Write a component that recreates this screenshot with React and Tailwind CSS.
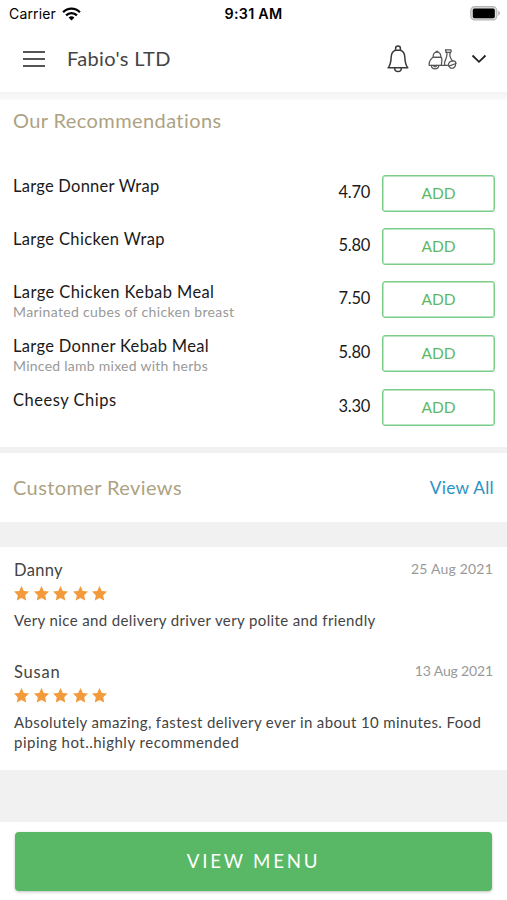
import React from "react";

const items = [
  { name: "Large Donner Wrap", price: "4.70", row: "h-[53px]", track: "tracking-[0.25px]" },
  { name: "Large Chicken Wrap", price: "5.80", row: "h-[53px]", track: "tracking-[0.35px]" },
  { name: "Large Chicken Kebab Meal", note: "Marinated cubes of chicken breast", noteTrack: "tracking-[0.34px]", price: "7.50", row: "h-[54px]", track: "tracking-[0.4px]" },
  { name: "Large Donner Kebab Meal", note: "Minced lamb mixed with herbs", noteTrack: "tracking-[0.26px]", price: "5.80", row: "h-[54px]", track: "tracking-[0.33px]" },
  { name: "Cheesy Chips", price: "3.30", row: "h-[58px]", track: "tracking-[0.5px]" },
];

const reviews = [
  {
    name: "Danny",
    nameTrack: "tracking-[0.3px]",
    date: "25 Aug 2021",
    dateTrack: "tracking-[0.2px]",
    lines: [{ text: "Very nice and delivery driver very polite and friendly", track: "tracking-[0.38px]" }],
  },
  {
    name: "Susan",
    nameTrack: "tracking-[0.8px]",
    date: "13 Aug 2021",
    dateTrack: "tracking-[-0.15px]",
    lines: [
      { text: "Absolutely amazing, fastest delivery ever in about 10 minutes. Food", track: "tracking-[0.37px]" },
      { text: "piping hot..highly recommended", track: "tracking-[0.5px]" },
    ],
  },
];

function Star() {
  return (
    <svg width="15" height="15" viewBox="0 0 15 15" fill="#f29a3c">
      <path d="M7.5 0 9.8 4.9 15 5.5 11.2 9.2 12.2 14.6 7.5 12 2.8 14.6 3.8 9.2 0 5.5 5.2 4.9Z" />
    </svg>
  );
}

function Wifi() {
  return (
    <svg width="19" height="14" viewBox="0 0 19 14" fill="none" stroke="#000" strokeWidth="2.3">
      <path d="M1.1 5.3C5.8 0.4 13.2 0.4 17.9 5.3" />
      <path d="M4.1 8.4C7.1 5.3 11.9 5.3 14.9 8.4" />
      <path d="M6.6 10.4C8.3 8.8 10.7 8.8 12.4 10.4L9.5 13.5Z" fill="#000" stroke="none" />
    </svg>
  );
}

function Battery() {
  return (
    <svg width="31" height="15" viewBox="0 0 31 15">
      <rect x="0.8" y="0.7" width="26" height="13.2" rx="3.8" fill="#ddd" stroke="#b5b5b5" strokeWidth="1.2" />
      <rect x="2.8" y="2.6" width="22" height="9.6" rx="1.6" fill="#000" />
      <path d="M28.2 4.8C30.6 5.6 30.6 9 28.2 9.8Z" fill="#b5b5b5" />
    </svg>
  );
}

function Bell() {
  return (
    <svg width="22" height="28" viewBox="0 0 22 28" fill="none" stroke="#3a3a3a" strokeWidth="1.5" strokeLinejoin="round" strokeLinecap="round">
      <path d="M8.6 5V3.4C8.6 0.2 13.4 0.2 13.4 3.4V5" />
      <path d="M8.3 5.2H13.7" />
      <path d="M8.6 5.2C5.6 6 4.4 8.3 4.2 12C4 17 3.6 19.8 1.2 22.8H20.8C18.4 19.8 18 17 17.8 12C17.6 8.3 16.4 6 13.4 5.2" />
      <path d="M7.6 23C7.8 27.8 14.2 27.8 14.4 23" />
    </svg>
  );
}

function Scooter() {
  return (
    <svg width="29" height="21" viewBox="0 0 29 21" fill="none" stroke="#555" strokeWidth="1.25" strokeLinejoin="round" strokeLinecap="round">
      <path d="M5.2 8.3C4.8 4.6 6.5 3 8.9 3C11.4 3 13.1 4.7 12.8 8.3Z" />
      <path d="M8 3C8 1.7 10 1.7 10 3" />
      <path d="M4.7 8.4H13.4C14.4 10.4 13.7 13 13.3 16.3H1.2C0.7 12.6 2.2 10.6 4.7 8.4Z" />
      <path d="M3.4 16.4C3.6 21 10.4 21 10.8 16.4" />
      <path d="M5.6 16.4C6 18.2 8.2 18.2 8.6 16.4" />
      <path d="M13.3 16.3H20.4" />
      <path d="M17.6 0.8H22.6C23.5 1.6 23.3 2.7 22.4 3.4C21.4 5 21.6 6.6 22.6 9L24.5 12" />
      <path d="M17.6 0.8C17.3 2.4 18.4 3 19 4.4C19.4 8 17.2 10.6 16.6 13.4C16.5 14.6 16.5 15.5 16.9 16.3" />
      <path d="M20.4 16.3C20.2 13.4 22.6 11.8 25.2 11.9C27 12 27.8 13.2 28 14.5L20.9 17.1" />
      <path d="M20.9 17.1C22.2 20.6 27.6 20 27.6 14.8" />
      <path d="M17.9 3.4H22.2" />
    </svg>
  );
}

export default function App() {
  return (
    <div className="flex h-[900px] w-[507px] flex-col overflow-hidden bg-white font-['Lato',sans-serif]">
      <div className="grid h-[26px] shrink-0 grid-cols-3 items-center pl-[9px] pr-[6px] pt-[1px] font-['Inter',sans-serif] text-black">
        <div className="flex items-center gap-[6px]">
          <span className="text-[14px] tracking-[0.15px]">Carrier</span>
          <Wifi />
        </div>
        <span className="-ml-[3px] text-center text-[14.3px] font-semibold tracking-[0.25px]">9:31 AM</span>
        <div className="flex justify-end"><Battery /></div>
      </div>

      <header className="flex h-[66px] shrink-0 items-center pl-[23px] pr-[20px]">
        <div className="flex w-[22px] flex-col gap-[5px]">
          <span className="h-[2px] bg-[#555]" />
          <span className="h-[2px] bg-[#555]" />
          <span className="h-[2px] bg-[#555]" />
        </div>
        <h1 className="ml-[22px] flex-1 whitespace-nowrap pb-[3px] text-[20px] tracking-[0.35px] text-[#444]">Fabio's LTD</h1>
        <Bell />
        <div className="ml-[19px]"><Scooter /></div>
        <svg className="ml-[14px]" width="16" height="10" viewBox="0 0 16 10" fill="none" stroke="#222" strokeWidth="1.8">
          <path d="M1.5 1.5 8 7.8 14.5 1.5" />
        </svg>
      </header>
      <div className="h-[8px] shrink-0 bg-linear-to-b from-[#f4f4f4] to-[#fafafa]" />

      <section className="h-[347px] shrink-0 px-[13px]">
        <h2 className="h-[75px] pt-[8px] text-[20px] leading-[24px] tracking-[0.4px] text-[#ada283]">Our Recommendations</h2>
        {items.map((item) => (
          <div key={item.name} className={"flex items-start " + item.row}>
            <div className="flex-1 whitespace-nowrap">
              <p className={"text-[16.5px] leading-[22px] text-[#1a1a1a] " + item.track}>{item.name}</p>
              {item.note && <p className={"text-[14px] leading-[18px] text-[#999] " + item.noteTrack}>{item.note}</p>}
            </div>
            <span className="mr-[12px] mt-[6px] text-[16.5px] leading-[22px] tracking-[-0.3px] text-[#1a1a1a]">{item.price}</span>
            <button className="mr-[-1px] h-[37px] w-[113px] rounded-[3px] border border-[#7bcd88] text-[15.5px] leading-none text-[#5cb866] shadow-[inset_0_0_0_0.5px_#7bcd88]">ADD</button>
          </div>
        ))}
      </section>

      <div className="h-[6px] shrink-0 bg-[#f1f1f1]" />
      <section className="flex h-[69px] shrink-0 items-center justify-between px-[13px]">
        <h2 className="pb-[2px] text-[20px] tracking-[0.4px] text-[#ada283]">Customer Reviews</h2>
        <a className="text-[17.3px] tracking-[0.3px] text-[#2b93c4]">View All</a>
      </section>
      <div className="h-[25px] shrink-0 bg-[#f1f1f1]" />

      <section className="h-[223px] shrink-0 px-[14px] pt-[12px] text-[#444]">
        {reviews.map((r) => (
          <article key={r.name} className="h-[102px] whitespace-nowrap">
            <div className="flex justify-between">
              <h3 className={"text-[16.5px] leading-[22px] " + r.nameTrack}>{r.name}</h3>
              <time className={"text-[14px] leading-[19px] text-[#999] " + r.dateTrack}>{r.date}</time>
            </div>
            <div className="mt-[5px] flex gap-[4.6px]">
              {[0, 1, 2, 3, 4].map((n) => <Star key={n} />)}
            </div>
            <div className="mt-[9px] text-[15px] leading-[20px]">
              {r.lines.map((l) => <p key={l.text} className={l.track}>{l.text}</p>)}
            </div>
          </article>
        ))}
      </section>

      <div className="h-[52px] shrink-0 bg-[#f1f1f1]" />
      <footer className="h-[78px] shrink-0 px-[15px] pt-[9.5px]">
        <button className="h-[59px] w-full rounded-[4px] bg-[#59b865] pt-[1px] text-[18.7px] tracking-[2.75px] text-white shadow-[0_1px_3px_rgba(0,0,0,0.25)]">VIEW MENU</button>
      </footer>
    </div>
  );
}
